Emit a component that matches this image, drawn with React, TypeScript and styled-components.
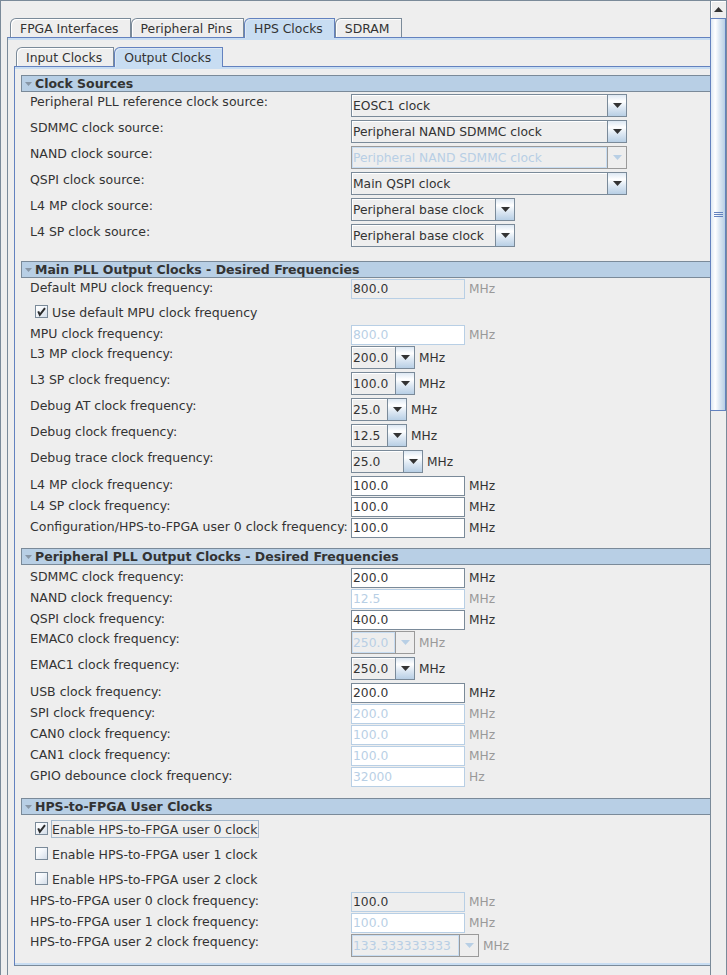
import React from "react";
import styled, { createGlobalStyle } from "styled-components";

const GlobalStyle = createGlobalStyle`
  html, body {
    margin: 0;
    padding: 0;
    background: #eeeeee;
  }
  body {
    font-family: "DejaVu Sans", "Liberation Sans", sans-serif;
    color: #333333;
  }
`;

type Ctl =
    | { kind: "combo"; value: string; width: number; unit?: string; disabled?: boolean }
    | { kind: "text"; value: string; state: "on" | "ro" | "off"; unit?: string };

type RowDef =
    | { kind: "field"; label: string; ctl: Ctl }
    | { kind: "check"; label: string; checked?: boolean; focused?: boolean };

type SectionDef = { title: string; pt: number; pb: number; rows: RowDef[] };

const combo = (value: string, width: number, unit?: string, disabled?: boolean): Ctl =>
    ({ kind: "combo", value, width, unit, disabled });
const text = (value: string, state: "on" | "ro" | "off", unit = "MHz"): Ctl =>
    ({ kind: "text", value, state, unit });

const sections: SectionDef[] = [
    {
        title: "Clock Sources", pt: 2, pb: 11, rows: [
            { kind: "field", label: "Peripheral PLL reference clock source:", ctl: combo("EOSC1 clock", 276) },
            { kind: "field", label: "SDMMC clock source:", ctl: combo("Peripheral NAND SDMMC clock", 276) },
            { kind: "field", label: "NAND clock source:", ctl: combo("Peripheral NAND SDMMC clock", 276, undefined, true) },
            { kind: "field", label: "QSPI clock source:", ctl: combo("Main QSPI clock", 276) },
            { kind: "field", label: "L4 MP clock source:", ctl: combo("Peripheral base clock", 164) },
            { kind: "field", label: "L4 SP clock source:", ctl: combo("Peripheral base clock", 164) },
        ]
    },
    {
        title: "Main PLL Output Clocks - Desired Frequencies", pt: 1, pb: 9, rows: [
            { kind: "field", label: "Default MPU clock frequency:", ctl: text("800.0", "ro") },
            { kind: "check", label: "Use default MPU clock frequency", checked: true },
            { kind: "field", label: "MPU clock frequency:", ctl: text("800.0", "off") },
            { kind: "field", label: "L3 MP clock frequency:", ctl: combo("200.0", 64, "MHz") },
            { kind: "field", label: "L3 SP clock frequency:", ctl: combo("100.0", 64, "MHz") },
            { kind: "field", label: "Debug AT clock frequency:", ctl: combo("25.0", 56, "MHz") },
            { kind: "field", label: "Debug clock frequency:", ctl: combo("12.5", 56, "MHz") },
            { kind: "field", label: "Debug trace clock frequency:", ctl: combo("25.0", 72, "MHz") },
            { kind: "field", label: "L4 MP clock frequency:", ctl: text("100.0", "on") },
            { kind: "field", label: "L4 SP clock frequency:", ctl: text("100.0", "on") },
            { kind: "field", label: "Configuration/HPS-to-FPGA user 0 clock frequency:", ctl: text("100.0", "on") },
        ]
    },
    {
        title: "Peripheral PLL Output Clocks - Desired Frequencies", pt: 3, pb: 10, rows: [
            { kind: "field", label: "SDMMC clock frequency:", ctl: text("200.0", "on") },
            { kind: "field", label: "NAND clock frequency:", ctl: text("12.5", "off") },
            { kind: "field", label: "QSPI clock frequency:", ctl: text("400.0", "on") },
            { kind: "field", label: "EMAC0 clock frequency:", ctl: combo("250.0", 64, "MHz", true) },
            { kind: "field", label: "EMAC1 clock frequency:", ctl: combo("250.0", 64, "MHz") },
            { kind: "field", label: "USB clock frequency:", ctl: text("200.0", "on") },
            { kind: "field", label: "SPI clock frequency:", ctl: text("200.0", "off") },
            { kind: "field", label: "CAN0 clock frequency:", ctl: text("100.0", "off") },
            { kind: "field", label: "CAN1 clock frequency:", ctl: text("100.0", "off") },
            { kind: "field", label: "GPIO debounce clock frequency:", ctl: text("32000", "off", "Hz") },
        ]
    },
    {
        title: "HPS-to-FPGA User Clocks", pt: 2, pb: 0, rows: [
            { kind: "check", label: "Enable HPS-to-FPGA user 0 clock", checked: true, focused: true },
            { kind: "check", label: "Enable HPS-to-FPGA user 1 clock" },
            { kind: "check", label: "Enable HPS-to-FPGA user 2 clock" },
            { kind: "field", label: "HPS-to-FPGA user 0 clock frequency:", ctl: text("100.0", "ro") },
            { kind: "field", label: "HPS-to-FPGA user 1 clock frequency:", ctl: text("100.0", "off") },
            { kind: "field", label: "HPS-to-FPGA user 2 clock frequency:", ctl: combo("133.333333333", 128, "MHz", true) },
        ]
    },
];

const DownArrow = ({ color }: { color: string }) => (
    <svg width="9" height="5" viewBox="0 0 9 5">
        <polygon points="0,0 9,0 4.5,5" fill={color}/>
    </svg>
);

const FieldControl = ({ ctl }: { ctl: Ctl }) => {
    if (ctl.kind === "combo") {
        return (
            <Control>
                <Combo $w={ctl.width} $off={!!ctl.disabled}>
                    <ComboText $off={!!ctl.disabled}>{ctl.value}</ComboText>
                    <ComboButton $off={!!ctl.disabled}>
                        <DownArrow color={ctl.disabled ? "#b8cfe5" : "#333333"}/>
                    </ComboButton>
                </Combo>
                {ctl.unit && <Unit $off={!!ctl.disabled}>{ctl.unit}</Unit>}
            </Control>
        );
    }
    return (
        <Control>
            <TextField $state={ctl.state}>{ctl.value}</TextField>
            {ctl.unit && <Unit $off={ctl.state !== "on"}>{ctl.unit}</Unit>}
        </Control>
    );
};

export default function App(): React.JSX.Element {
    return (
        <>
            <GlobalStyle/>
            <Frame>
                <Viewport>
                    <OuterPane>
                        <TabStrip $inset={3}>
                            <Tab>FPGA Interfaces</Tab>
                            <Tab>Peripheral Pins</Tab>
                            <Tab $active>HPS Clocks</Tab>
                            <Tab>SDRAM</Tab>
                        </TabStrip>
                        <OuterBody>
                            <TabStrip $inset={2}>
                                <Tab>Input Clocks</Tab>
                                <Tab $active>Output Clocks</Tab>
                            </TabStrip>
                            <InnerBody>
                                {sections.map((section) => (
                                    <section key={section.title}>
                                        <SectionHeader>
                                            <svg width="7" height="4" viewBox="0 0 7 4">
                                                <polygon points="0,0 7,0 3.5,4" fill="#8796a6"/>
                                            </svg>
                                            <span>{section.title}</span>
                                        </SectionHeader>
                                        <SectionBody $pt={section.pt} $pb={section.pb}>
                                            {section.rows.map((row) => row.kind === "check" ? (
                                                <CheckRow key={row.label}>
                                                    <CheckBox>
                                                        {row.checked && (
                                                            <svg width="11" height="11" viewBox="0 0 11 11">
                                                                <path d="M2.2 5.4 L3.8 8.8 L9 2.2" stroke="#2b2b2b"
                                                                      strokeWidth="2" fill="none"/>
                                                            </svg>
                                                        )}
                                                    </CheckBox>
                                                    <CheckText $focused={!!row.focused}>{row.label}</CheckText>
                                                </CheckRow>
                                            ) : (
                                                <Row key={row.label} $h={row.ctl.kind === "combo" ? 26 : 21}>
                                                    <Label $pt={row.ctl.kind === "combo" ? 1 : 2}>{row.label}</Label>
                                                    <FieldControl ctl={row.ctl}/>
                                                </Row>
                                            ))}
                                        </SectionBody>
                                    </section>
                                ))}
                            </InnerBody>
                        </OuterBody>
                    </OuterPane>
                </Viewport>
                <ScrollBar>
                    <ScrollUp>
                        <svg width="9" height="5" viewBox="0 0 9 5">
                            <polygon points="4.5,0 9,5 0,5" fill="#333333"/>
                        </svg>
                    </ScrollUp>
                    <Thumb>
                        <Grip/>
                        <Grip/>
                        <Grip/>
                    </Thumb>
                    <Track/>
                </ScrollBar>
            </Frame>
        </>
    );
}

const Frame = styled.div`
  width: 727px;
  height: 975px;
  box-sizing: border-box;
  display: flex;
  border: 1px solid #7a8a99;
  border-bottom: none;
  background: #eeeeee;
  overflow: hidden;
`;

const Viewport = styled.div`
  flex: 1;
  min-width: 0;
  overflow: hidden;
  display: flex;
  flex-direction: column;
  padding-top: 17px;
`;

const OuterPane = styled.div`
  flex: 1;
  width: 760px;
  margin-left: 6px;
  display: flex;
  flex-direction: column;
`;

const TabStrip = styled.div<{ $inset: number }>`
  display: flex;
  align-items: flex-end;
  height: 19px;
  padding-left: ${p => p.$inset}px;
`;

const Tab = styled.div<{ $active?: boolean }>`
  position: relative;
  z-index: ${p => p.$active ? 2 : 0};
  height: ${p => p.$active ? 20 : 19}px;
  margin-bottom: ${p => p.$active ? -1 : 0}px;
  box-sizing: border-box;
  display: flex;
  align-items: center;
  padding: ${p => p.$active ? "0 11px 1px 9px" : "0 11px 0 9px"};
  font-size: 12.4px;
  white-space: nowrap;
  color: #333333;
  background: ${p => p.$active ? "#c8ddf2" : "#eeeeee"};
  border: 1px solid ${p => p.$active ? "#6382bf" : "#7a8a99"};
  border-bottom: none;
  border-top-left-radius: 6px;
  box-shadow: inset 1px 1px 0 ${p => p.$active ? "#dde8f3" : "#ffffff"};
`;

const OuterBody = styled.div`
  flex: 1;
  border-top: 1px solid #6382bf;
  border-left: 1px solid #7a8a99;
  box-shadow: inset 0 2px 0 #c8ddf2;
  padding: 9px 0 0 6px;
`;

const InnerBody = styled.div`
  border-top: 1px solid #6382bf;
  border-left: 1px solid #6382bf;
  border-bottom: 1px solid #7a8a99;
  box-shadow: inset 0 2px 0 #c8ddf2, inset 0 -2px 0 #c8ddf2;
  padding: 8px 0 5px 6px;
`;

const SectionHeader = styled.div`
  height: 17px;
  box-sizing: border-box;
  display: flex;
  align-items: center;
  gap: 3px;
  padding-left: 3px;
  border: 1px solid #7a8a99;
  background: #b8cfe5;
  font-size: 12.5px;
  font-weight: bold;
  color: #333333;
  white-space: nowrap;
`;

const SectionBody = styled.div<{ $pt: number; $pb: number }>`
  padding: ${p => p.$pt}px 0 ${p => p.$pb}px 9px;
`;

const Row = styled.div<{ $h: number }>`
  display: flex;
  align-items: flex-start;
  height: ${p => p.$h}px;
`;

const Label = styled.div<{ $pt: number }>`
  width: 321px;
  flex: none;
  padding-top: ${p => p.$pt}px;
  font-size: 12.5px;
  line-height: 14px;
  white-space: nowrap;
`;

const Control = styled.div`
  display: flex;
  align-items: center;
  gap: 4px;
`;

const Unit = styled.span<{ $off: boolean }>`
  font-size: 12.2px;
  color: ${p => p.$off ? "#999999" : "#333333"};
`;

const TextField = styled.div<{ $state: "on" | "ro" | "off" }>`
  width: 114px;
  height: 20px;
  box-sizing: border-box;
  display: flex;
  align-items: center;
  padding-left: 1px;
  font-size: 12.3px;
  background: ${p => p.$state === "ro" ? "#eeeeee" : "#ffffff"};
  border: 1px solid ${p => p.$state === "on" ? "#7a8a99" : "#b8cfe5"};
  color: ${p => p.$state === "off" ? "#b8cfe5" : "#333333"};
`;

const Combo = styled.div<{ $w: number; $off: boolean }>`
  width: ${p => p.$w}px;
  height: 23px;
  box-sizing: border-box;
  display: flex;
  border: 1px solid ${p => p.$off ? "#9a9a9a" : "#7a8a99"};
  background: #eeeeee;
`;

const ComboText = styled.div<{ $off: boolean }>`
  flex: 1;
  min-width: 0;
  display: flex;
  align-items: center;
  padding-left: 1px;
  font-size: 12.3px;
  white-space: nowrap;
  overflow: hidden;
  color: ${p => p.$off ? "#b8cfe5" : "#333333"};
  box-shadow: ${p => p.$off ? "inset 0 0 0 1px #c8ddf2" : "inset 1px 1px 0 #ffffff"};
`;

const ComboButton = styled.div<{ $off: boolean }>`
  width: 19px;
  flex: none;
  box-sizing: border-box;
  display: flex;
  align-items: center;
  justify-content: center;
  border-left: 1px solid ${p => p.$off ? "#9a9a9a" : "#7a8a99"};
  background: ${p => p.$off ? "#eeeeee" : "linear-gradient(to bottom, #dde8f3, #ffffff 30%, #dde8f3 60%, #b8cfe5)"};
`;

const CheckRow = styled.div`
  height: 25px;
  box-sizing: border-box;
  display: flex;
  align-items: flex-start;
  padding: 5px 0 0 5px;
`;

const CheckBox = styled.div`
  width: 13px;
  height: 13px;
  box-sizing: border-box;
  flex: none;
  display: flex;
  align-items: center;
  justify-content: center;
  border: 1px solid #7a8a99;
  background: linear-gradient(135deg, #ffffff, #f4f7fb 40%, #d4dde8);
`;

const CheckText = styled.span<{ $focused: boolean }>`
  height: 18px;
  box-sizing: border-box;
  margin: -2px 0 0 3px;
  display: flex;
  align-items: center;
  padding: 0 1px 0 0;
  font-size: 12.5px;
  white-space: nowrap;
  border: 1px solid ${p => p.$focused ? "#a3b8cc" : "transparent"};
`;

const ScrollBar = styled.div`
  width: 16px;
  flex: none;
  display: flex;
  flex-direction: column;
`;

const ScrollUp = styled.div`
  height: 17px;
  box-sizing: border-box;
  display: flex;
  align-items: center;
  justify-content: center;
  border-left: 1px solid #7a8a99;
  background: #eeeeee;
  box-shadow: inset 1px 1px 0 #ffffff;
`;

const Thumb = styled.div`
  height: 393px;
  box-sizing: border-box;
  display: flex;
  flex-direction: column;
  align-items: center;
  justify-content: center;
  gap: 1px;
  border: 1px solid #6382bf;
  background: linear-gradient(to right, #dde8f3, #ffffff 30%, #dde8f3 60%, #b8cfe5);
`;

const Grip = styled.div`
  width: 9px;
  height: 1px;
  background: #6382bf;
`;

const Track = styled.div`
  flex: 1;
  border-left: 1px solid #7a8a99;
  background: #eeeeee;
`;
